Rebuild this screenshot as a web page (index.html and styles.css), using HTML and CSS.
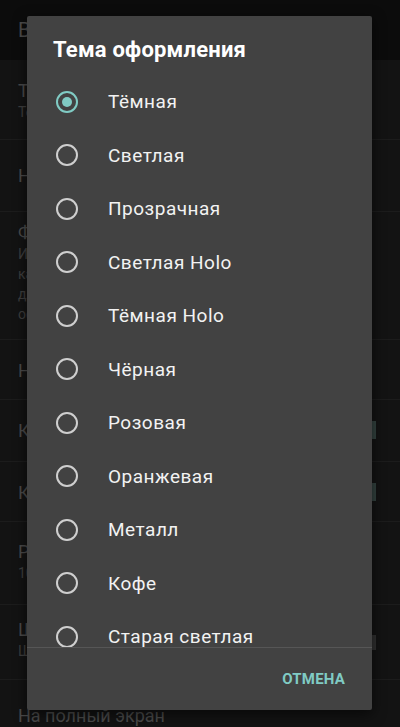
FILE: index.html
```html
<!DOCTYPE html>
<html lang="ru">
<head>
  <meta charset="UTF-8">
  <meta name="viewport" content="width=device-width, initial-scale=1.0">
  <title>Тема оформления</title>
  <link rel="stylesheet" href="styles.css">
</head>
<body>
  <div class="screen">
    <header class="toolbar">Внешний вид</header>
    <div class="pref pref-1">
      <div class="pref-title">Тема оформления</div>
      <div class="pref-sub">Тёмная</div>
    </div>
    <div class="pref pref-2">
      <div class="pref-title">Настройка цветов</div>
    </div>
    <div class="pref pref-3">
      <div class="pref-title">Фоновое изображение</div>
      <div class="pref-sub">Изображение, которое</div>
      <div class="pref-sub">как фон главного экрана</div>
      <div class="pref-sub">для всех тем</div>
      <div class="pref-sub">оформления</div>
    </div>
    <div class="pref pref-4">
      <div class="pref-title">Начальный экран</div>
    </div>
    <div class="pref pref-5">
      <div class="pref-title">Кнопки навигации</div>
      <span class="switch"></span>
    </div>
    <div class="pref pref-6">
      <div class="pref-title">Компактный режим</div>
      <span class="switch"></span>
    </div>
    <div class="pref pref-7">
      <div class="pref-title">Размер шрифта</div>
      <div class="pref-sub">100%</div>
    </div>
    <div class="pref pref-8">
      <div class="pref-title">Шрифт</div>
      <div class="pref-sub">Шрифт по умолчанию</div>
      <span class="switch switch-grey"></span>
    </div>
    <div class="pref pref-9">
      <div class="pref-title">На полный экран</div>
    </div>
  </div>

  <div class="dialog">
    <div class="dialog-title">Тема оформления</div>
    <div class="options">
      <label class="option"><span class="radio checked"></span>Тёмная</label>
      <label class="option"><span class="radio"></span>Светлая</label>
      <label class="option"><span class="radio"></span>Прозрачная</label>
      <label class="option"><span class="radio"></span>Светлая Holo</label>
      <label class="option"><span class="radio"></span>Тёмная Holo</label>
      <label class="option"><span class="radio"></span>Чёрная</label>
      <label class="option"><span class="radio"></span>Розовая</label>
      <label class="option"><span class="radio"></span>Оранжевая</label>
      <label class="option"><span class="radio"></span>Металл</label>
      <label class="option"><span class="radio"></span>Кофе</label>
      <label class="option"><span class="radio"></span>Старая светлая</label>
    </div>
    <div class="dialog-actions">
      <button type="button" class="btn-cancel">ОТМЕНА</button>
    </div>
  </div>
</body>
</html>
```

FILE: styles.css
```css
* {
  margin: 0;
  padding: 0;
  box-sizing: border-box;
}
body {
  width: 400px;
  height: 727px;
  overflow: hidden;
  background-color: #131313;
  font-family: Roboto, "Noto Sans", sans-serif;
  position: relative;
}

/* экран настроек под диалогом */
.screen {
  display: flex;
  flex-direction: column;
}
.toolbar {
  height: 60px;
  padding: 20px 18px 0;
  background-color: #0c0c0c;
  color: #4c4c4c;
  font-size: 20px;
  line-height: 20px;
}
.pref {
  position: relative;
  padding: 0 18px;
  border-bottom: 1px solid #1c1c1c;
  color: #4a4a4a;
  display: flex;
  flex-direction: column;
}
.pref-title {
  font-size: 18px;
  line-height: 22px;
}
.pref-sub {
  font-size: 14px;
  line-height: 20px;
  color: #3e3e3e;
}
.pref-1 { height: 80px; padding-top: 20px; }
.pref-2 { height: 72px; padding-top: 25px; }
.pref-3 { height: 128px; padding-top: 10px; }
.pref-4 { height: 60px; padding-top: 20px; }
.pref-5 { height: 62px; padding-top: 20px; }
.pref-6 { height: 60px; padding-top: 20px; }
.pref-7 { height: 83px; padding-top: 19px; }
.pref-8 { height: 75px; padding-top: 14px; }
.pref-9 { height: 60px; padding-top: 25px; border-bottom: none; }
.switch {
  position: absolute;
  right: 24px;
  top: 21px;
  width: 4px;
  height: 18px;
  background-color: #33423f;
}
.switch-grey {
  top: 30px;
  height: 15px;
  background-color: #303030;
}

/* диалог выбора темы */
.dialog {
  position: absolute;
  top: 16px;
  left: 27px;
  width: 345px;
  height: 694px;
  background-color: #424242;
  border-radius: 2px;
  box-shadow: 0 4px 14px rgba(0, 0, 0, 0.6);
  display: flex;
  flex-direction: column;
}
.dialog-title {
  padding: 21px 24px 0 26px;
  color: #ffffff;
  font-size: 22px;
  font-weight: bold;
  line-height: 26px;
  letter-spacing: 0.2px;
}
.options {
  height: 585px;
  padding-top: 12px;
  overflow: hidden;
  border-bottom: 1px solid #565656;
}
.option {
  height: 53.5px;
  display: flex;
  align-items: center;
  gap: 30px;
  padding-left: 29px;
  color: #f2f2f2;
  font-size: 19px;
  letter-spacing: 0.5px;
}
.radio {
  width: 22px;
  height: 22px;
  border: 2px solid #cfcfcf;
  border-radius: 50%;
  flex-shrink: 0;
  display: flex;
  justify-content: center;
  align-items: center;
}
.radio.checked {
  border-color: #80cbc4;
}
.radio.checked::after {
  content: "";
  width: 10px;
  height: 10px;
  border-radius: 50%;
  background-color: #80cbc4;
}
.dialog-actions {
  flex: 1;
  display: flex;
  justify-content: flex-end;
  align-items: center;
  padding-right: 27px;
}
.btn-cancel {
  background: none;
  border: none;
  color: #80cbc4;
  font-family: Roboto, "Noto Sans", sans-serif;
  font-size: 15px;
  font-weight: bold;
  letter-spacing: 0.2px;
}
```
